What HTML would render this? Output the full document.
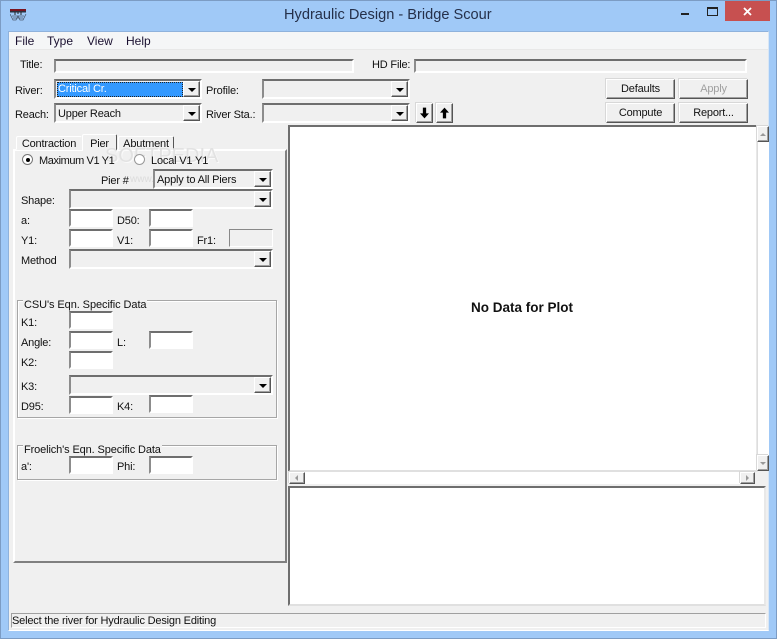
<!DOCTYPE html>
<html><head><meta charset="utf-8"><style>
html,body{margin:0;padding:0;width:777px;height:639px;overflow:hidden;background:#a0c9f7}
*{box-sizing:border-box}
#w{position:relative;width:777px;height:639px;border:1px solid #7c9cc4;font:11px "Liberation Sans",sans-serif;letter-spacing:-.18px;color:#111}
.a{position:absolute;margin:0}
#w>*{margin-left:-1px;margin-top:-1px}
#w>.t{position:absolute;white-space:nowrap;line-height:14px;margin-left:-1px;margin-top:0}
.f{position:absolute;background:#fff;border:2px solid;border-color:#6e6e6e #fff #fff #8c8c8c}
.d{background:#f0f0f0}
.c{position:absolute;background:#f0f0f0;border:2px solid;border-color:#6e6e6e #fff #fff #8c8c8c;white-space:nowrap;line-height:18px;padding-left:2px}
.c i{position:absolute;right:0;top:0;width:17px;height:16px;background:#f0f0f0;border:1px solid;border-color:#fff #555 #555 #fff;box-shadow:inset -1px -1px 0 #a0a0a0}
.c i:after{content:"";position:absolute;left:4px;top:6px;border:4px solid transparent;border-top:4px solid #000;border-bottom:0}
.b{position:absolute;background:#f0f0f0;border:1px solid;border-color:#fff #555 #555 #fff;box-shadow:inset -1px -1px 0 #a0a0a0,-1px -1px 0 #d8d8d8;text-align:center;line-height:18px}
.g{position:absolute;border:1px solid #a6a6a6;box-shadow:inset 1px 1px 0 #fff,1px 1px 0 #fff}
.g span{position:absolute;left:5px;top:-3px;background:#f0f0f0;padding:0 1px;line-height:14px;white-space:nowrap}
.tab{position:absolute;background:#f0f0f0;border:1px solid;border-color:#fff #555 transparent #fff;border-radius:2px 2px 0 0;text-align:center;line-height:14px;white-space:nowrap}
</style></head><body><div id="w">
<svg class="a" style="left:10px;top:9px" width="17" height="13" viewBox="0 0 17 13"><rect width="16" height="2" fill="#7a1420"/><rect y="2" width="16" height="1.500" fill="#2b3340"/><path d="M5 3v3M11 3v3M8 3v2" stroke="#222" fill="none"/><path d="M0 5l3 6h3l2-4 2 4h3l3-6M2 7h12M3 9h10" stroke="#4a5a70" fill="none" stroke-width=".8"/></svg>
<div class="t" style="left:284px;top:6px;font-size:14.6px;line-height:17px;color:#25304a;letter-spacing:0">Hydraulic Design - Bridge Scour</div>
<div class="a" style="left:681px;top:13px;width:8px;height:2px;background:#222"></div>
<div class="a" style="left:707px;top:7px;width:11px;height:9px;border:1px solid #222;border-top-width:2px"></div>
<div class="a" style="left:725px;top:1px;width:45px;height:20px;background:#c75050"></div>
<svg class="a" style="left:743px;top:7px" width="10" height="9"><path d="M1 1l7 7M8 1l-7 7" stroke="#fff" stroke-width="1.8"/></svg>

<div class="a" style="left:8px;top:31px;width:761px;height:600px;background:#f0f0f0;border:1px solid #8fb2dc;border-bottom-color:#fff;border-right-color:#d8e6f5"></div>
<div class="a" style="left:9px;top:32px;width:759px;height:18px;background:#f5f6f7;border-bottom:1px solid #e8e8e8"></div>
<div class="t" style="left:15px;top:33px;font-size:12px;color:#1a1030;letter-spacing:0">File</div>
<div class="t" style="left:47px;top:33px;font-size:12px;color:#1a1030;letter-spacing:0">Type</div>
<div class="t" style="left:87px;top:33px;font-size:12px;color:#1a1030;letter-spacing:0">View</div>
<div class="t" style="left:126px;top:33px;font-size:12px;color:#1a1030;letter-spacing:0">Help</div>

<div class="t" style="left:20px;top:57px">Title:</div>
<div class="f d" style="left:54px;top:59px;width:300px;height:14px"></div>
<div class="t" style="left:372px;top:57px">HD File:</div>
<div class="f d" style="left:414px;top:59px;width:333px;height:14px"></div>

<div class="t" style="left:15px;top:83px">River:</div>
<div class="c" style="left:54px;top:79px;width:148px;height:20px"><i></i></div>
<div class="a" style="left:57px;top:82px;width:126px;height:15px;background:#3399ff;outline:1px dotted #222;outline-offset:-1px;color:#fff;line-height:15px;padding-left:1px">Critical Cr.</div>
<div class="t" style="left:206px;top:83px">Profile:</div>
<div class="c" style="left:262px;top:79px;width:148px;height:20px"><i></i></div>

<div class="t" style="left:15px;top:107px">Reach:</div>
<div class="c" style="left:54px;top:103px;width:148px;height:20px">Upper Reach<i></i></div>
<div class="t" style="left:206px;top:107px">River Sta.:</div>
<div class="c" style="left:262px;top:103px;width:148px;height:20px"><i></i></div>

<div class="b" style="left:416px;top:103px;width:17px;height:20px"></div>
<svg class="a" style="left:420px;top:107px" width="9" height="12" viewBox="0 0 11 13"><path d="M3.500 0h4v7H11L5.500 13 0 7h3.500z" fill="#000"/></svg>
<div class="b" style="left:436px;top:103px;width:17px;height:20px"></div>
<svg class="a" style="left:440px;top:107px" width="9" height="12" viewBox="0 0 11 13"><path d="M3.500 13h4V6H11L5.500 0 0 6h3.500z" fill="#000"/></svg>

<div class="b" style="left:606px;top:79px;width:69px;height:20px">Defaults</div>
<div class="b" style="left:679px;top:79px;width:69px;height:20px;color:#a0a0a0">Apply</div>
<div class="b" style="left:606px;top:103px;width:69px;height:20px">Compute</div>
<div class="b" style="left:679px;top:103px;width:69px;height:20px">Report...</div>

<div class="a" style="left:13px;top:149px;width:274px;height:414px;background:#f0f0f0;border:2px solid;border-color:#fff #808080 #808080 #fff"></div>
<div class="tab" style="left:16px;top:136px;width:66px;height:14px;border-right-color:transparent">Contraction</div>
<div class="tab" style="left:118px;top:136px;width:56px;height:14px">Abutment</div>
<div class="tab" style="left:82px;top:134px;width:35px;height:17px;border-bottom:0;line-height:18px">Pier</div>

<div class="t" style="left:105px;top:144px;font-size:20px;line-height:22px;color:#e2e2e2;letter-spacing:0;text-shadow:1px 1px 0 #fafafa">SOFTPEDIA</div>
<div class="t" style="left:130px;top:172px;font-size:10px;color:#dcdcdc;letter-spacing:0">www.softpedia.com</div>

<div class="a" style="left:22px;top:154px;width:11px;height:11px;border-radius:50%;background:#fff;border:1px solid #777"></div>
<div class="a" style="left:26px;top:158px;width:4px;height:4px;border-radius:50%;background:#000"></div>
<div class="t" style="left:39px;top:153px;letter-spacing:-.4px">Maximum V1 Y1</div>
<div class="a" style="left:134px;top:154px;width:11px;height:11px;border-radius:50%;background:#fff;border:1px solid #999"></div>
<div class="t" style="left:151px;top:153px">Local V1 Y1</div>

<div class="t" style="left:101px;top:173px">Pier #</div>
<div class="c" style="left:153px;top:169px;width:120px;height:20px">Apply to All Piers<i></i></div>
<div class="t" style="left:21px;top:193px">Shape:</div>
<div class="c" style="left:69px;top:189px;width:204px;height:20px"><i></i></div>

<div class="t" style="left:21px;top:213px">a:</div>
<div class="f" style="left:69px;top:209px;width:44px;height:18px"></div>
<div class="t" style="left:117px;top:213px">D50:</div>
<div class="f" style="left:149px;top:209px;width:44px;height:18px"></div>
<div class="t" style="left:21px;top:233px">Y1:</div>
<div class="f" style="left:69px;top:229px;width:44px;height:18px"></div>
<div class="t" style="left:117px;top:233px">V1:</div>
<div class="f" style="left:149px;top:229px;width:44px;height:18px"></div>
<div class="t" style="left:197px;top:233px">Fr1:</div>
<div class="f d" style="left:229px;top:229px;width:44px;height:18px;border-width:1px;border-color:#888 #fff #fff #888"></div>
<div class="t" style="left:21px;top:253px">Method</div>
<div class="c" style="left:69px;top:249px;width:204px;height:20px"><i></i></div>

<div class="g" style="left:17px;top:300px;width:260px;height:118px"><span style="letter-spacing:-.08px">CSU's Eqn. Specific Data</span></div>
<div class="t" style="left:21px;top:315px">K1:</div>
<div class="f" style="left:69px;top:311px;width:44px;height:18px"></div>
<div class="t" style="left:21px;top:335px">Angle:</div>
<div class="f" style="left:69px;top:331px;width:44px;height:18px"></div>
<div class="t" style="left:117px;top:335px">L:</div>
<div class="f" style="left:149px;top:331px;width:44px;height:18px"></div>
<div class="t" style="left:21px;top:355px">K2:</div>
<div class="f" style="left:69px;top:351px;width:44px;height:18px"></div>
<div class="t" style="left:21px;top:379px">K3:</div>
<div class="c" style="left:69px;top:375px;width:204px;height:20px"><i></i></div>
<div class="t" style="left:21px;top:399px">D95:</div>
<div class="f" style="left:69px;top:396px;width:44px;height:18px"></div>
<div class="t" style="left:117px;top:399px">K4:</div>
<div class="f" style="left:149px;top:395px;width:44px;height:18px"></div>

<div class="g" style="left:17px;top:445px;width:260px;height:35px"><span style="letter-spacing:-.12px">Froelich's Eqn. Specific Data</span></div>
<div class="t" style="left:21px;top:459px">a':</div>
<div class="f" style="left:69px;top:456px;width:44px;height:18px"></div>
<div class="t" style="left:117px;top:459px">Phi:</div>
<div class="f" style="left:149px;top:456px;width:44px;height:18px"></div>

<div class="a" style="left:288px;top:125px;width:470px;height:347px;background:#fff;border:2px solid;border-color:#6e6e6e #e8e8e8 #e0e0e0 #6e6e6e"></div>
<div class="t" style="left:471px;top:300px;font-weight:bold;font-size:13.500px;letter-spacing:0">No Data for Plot</div>

<div class="a" style="left:757px;top:126px;width:12px;height:345px;background:#fff;border-left:1px solid #ddd"></div>
<div class="b" style="left:757px;top:126px;width:12px;height:16px"></div>
<div class="a" style="left:760px;top:133px;border:3px solid transparent;border-bottom:3px solid #999;border-top:0"></div>
<div class="b" style="left:757px;top:455px;width:12px;height:16px"></div>
<div class="a" style="left:760px;top:462px;border:3px solid transparent;border-top:3px solid #999;border-bottom:0"></div>

<div class="a" style="left:289px;top:472px;width:466px;height:12px;background:#fff"></div>
<div class="b" style="left:289px;top:472px;width:16px;height:12px"></div>
<div class="a" style="left:295px;top:475px;border:3px solid transparent;border-right:3px solid #999;border-left:0"></div>
<div class="b" style="left:740px;top:472px;width:15px;height:12px"></div>
<div class="a" style="left:746px;top:475px;border:3px solid transparent;border-left:3px solid #999;border-right:0"></div>

<div class="a" style="left:288px;top:486px;width:478px;height:120px;background:#fff;border:2px solid;border-color:#6e6e6e #e8e8e8 #e0e0e0 #6e6e6e"></div>

<div class="a" style="left:11px;top:613px;width:755px;height:15px;border:1px solid;border-color:#a0a0a0 #fff #fff #a0a0a0"></div>
<div class="t" style="left:12px;top:613px">Select the river for Hydraulic Design Editing</div>
</div></body></html>
